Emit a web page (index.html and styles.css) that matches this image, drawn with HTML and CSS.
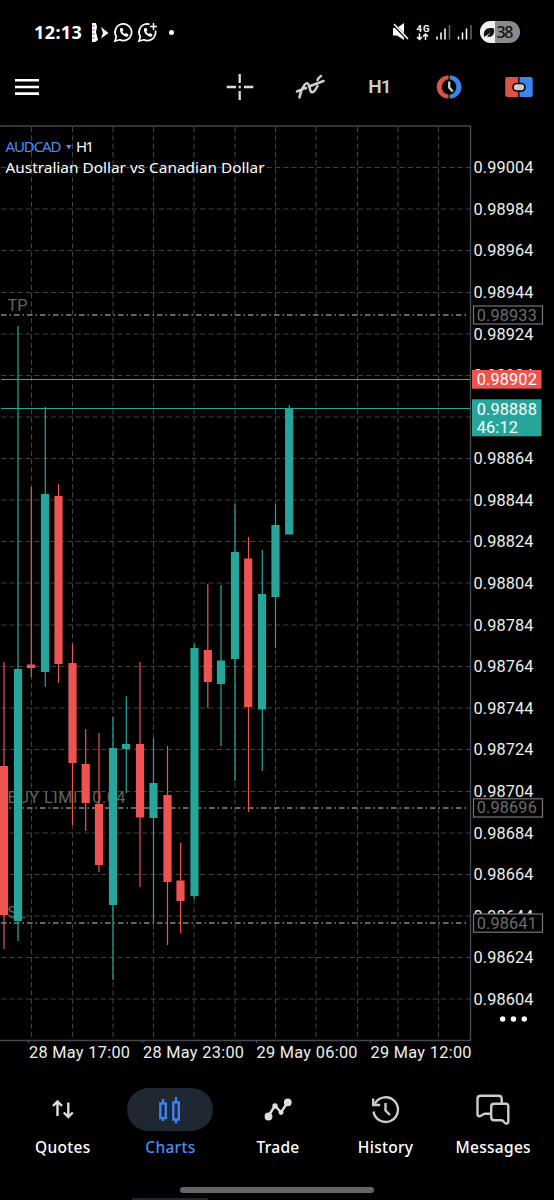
FILE: index.html
```
<!DOCTYPE html>
<html lang="en">

<head>
    <meta charset="UTF-8">
    <meta name="viewport" content="width=device-width, initial-scale=1.0">
    <title>AUDCAD H1</title>
    <link rel="stylesheet" href="styles.css">
</head>

<body>
    <div class="app">
        <!-- Status bar -->
        <div class="status-bar">
            <span class="clock">12:13</span>
            <svg class="status-left" width="90" height="24" viewBox="90 20 90 24">
                <path d="M92 23h4l1 4-1 5 2 8-3 2h-3z" fill="#fff" />
                <path d="M92.500 26h2M92.500 30h2M92.500 34h2M92.500 38h2" stroke="#000" stroke-width=".7" />
                <path d="M101 27l7.500 6-7.500 5.500 2-5.500z" fill="#fff" />
                <path d="M115 41l1.300-4.300a8.300 8.300 0 1 1 3.500 3.100zM139 41l1.300-4.300a8.300 8.300 0 1 1 3.500 3.100z" fill="none" stroke="#fff" stroke-width="1.700" />
                <path d="M149.500 22h8v8.500h-3.500l-4.500-4.500z" fill="#000" />
                <path d="M153.500 23v7M150 26.500h7" stroke="#fff" stroke-width="1.500" />
                <path d="M120 28.500c-1 4 4 9 8 8l.5-2-2.500-1.500-1.300 1c-1-.4-2-1.500-2.300-2.500l1-1.200-1-2.500zM144 28.500c-1 4 4 9 8 8l.5-2-2.500-1.500-1.300 1c-1-.4-2-1.500-2.300-2.500l1-1.200-1-2.500z" fill="#fff" />
                <circle cx="171.500" cy="32.500" r="2.500" fill="#fff" />
            </svg>
            <svg class="status-right" width="130" height="24" viewBox="391 20 130 24">
                <path d="M393 28h4l7-5v17l-7-4.500h-4z" fill="#fff" />
                <path d="M393.500 24.500l15 15.500" stroke="#000" stroke-width="3" />
                <path d="M394 24l14 15" stroke="#fff" stroke-width="1.600" />
                <text x="416.500" y="32" class="net" textLength="13">4G</text>
                <path d="M419.500 33.500v5.500M417 37l2.500 2.500 2.500-2.500M425.500 40v-5.500M423 36.500l2.500-2.500 2.500 2.500" fill="none" stroke="#fff" stroke-width="1.500" />
                <path d="M437 36.500v3M441 32.500v7M445 28.500v11M458.500 36.500v3M462.500 32.500v7M466.500 28.500v11" stroke="#fff" stroke-width="1.500" />
                <path d="M449.500 25v14.500M471 25v14.500" stroke="#666" stroke-width="1.500" />
                <path d="M491 21h18a11 11 0 0 1 0 22h-18a11 11 0 0 1 0-22z" fill="#8b8b8b" />
                <path d="M491 21h4v22h-4a11 11 0 0 1 0-22z" fill="#eee" />
                <path d="M484 37c-1-7 3-10 10-8.500 1 6-2 9.500-7 8l4-4-5.500 3.500z" fill="#111" />
                <text x="496.500" y="38" class="battery" textLength="17">38</text>
            </svg>
        </div>

        <!-- Toolbar -->
        <div class="toolbar">
            <svg width="26" height="22" viewBox="14 76 26 22">
                <path d="M15 80.300h24M15 87h24M15 93.600h24" stroke="#fff" stroke-width="2.600" />
            </svg>
            <div class="tools">
                <svg width="28" height="28" viewBox="226 73 28 28">
                    <path d="M239.700 74v9M239.700 91v9M226.700 87h9.300M244 87h9.300M238.600 87h2.200" stroke="#ddd" stroke-width="2.300" />
                </svg>
                <svg width="30" height="26" viewBox="294 74 30 26">
                    <path d="M296 91.500l6-2.500M298.500 97.500q1-7 5-12.500c3-4 5 0 5.500 4 .5 4 3 4.500 5.500.5M308 86.500l14.500-5.500M316.500 80q1-2.500 3.500-4M314.500 89.500l2-3.500M303.500 88.500l1.500-.5" fill="none" stroke="#ccc" stroke-width="2.500" stroke-linecap="round" />
                </svg>
                <span class="period">H1</span>
                <svg width="28" height="24" viewBox="435 75 28 24">
                    <path d="M448.200 75.800a11.200 11.200 0 0 0 0 22.400v-3.300a8 8 0 0 1 0-15.800z" fill="#dd5147" stroke="#dd5147" stroke-width=".7" />
                    <path d="M450 75.800a11.200 11.200 0 0 1 0 22.400v-3.300a8 8 0 0 0 0-15.800z" fill="#3a86ee" stroke="#3a86ee" stroke-width=".7" />
                    <path d="M449.200 81.500v6l3.500 4" fill="none" stroke="#ccc" stroke-width="2.300" />
                </svg>
                <svg width="28" height="20" viewBox="505 77 28 20">
                    <path d="M518.200 77h-11q-2 0-2 2v16q0 2 2 2h11z" fill="#dd5147" />
                    <path d="M519.500 77h11.200q2 0 2 2v16q0 2-2 2h-11.200z" fill="#3a86ee" />
                    <rect x="513" y="83.500" width="12" height="7.500" rx="3.700" fill="#ccc" stroke="#000" stroke-width="1.600" />
                </svg>
            </div>
        </div>

        <!-- Chart -->
        <svg class="chart" width="554" height="945" viewBox="0 125 554 945">
            <path class="grid" d="M31.500 127V1040M72.500 127V1040M113 127V1040M153.500 127V1040M194 127V1040M235 127V1040M275.500 127V1040M316 127V1040M357.500 127V1040M398 127V1040M438.500 127V1040" />
            <path class="grid" d="M1 167.500H472M1 209H472M1 250.500H472M1 292.500H472M1 334H472M1 375.500H472M1 417H472M1 458.500H472M1 500H472M1 541.500H472M1 583H472M1 625H472M1 666.500H472M1 708H472M1 749.500H472M1 791.500H472M1 833H472M1 874.500H472M1 916H472M1 957.500H472M1 999H472" />
            <path class="frame" d="M0 126H470.500V1040.500H0M28.500 1041v2M142.500 1041v2M256.500 1041v2M370.500 1041v2" />

            <!-- Orders -->
            <path class="order" d="M1 315H468M1 808H468M1 923H468" />
            <text class="order-text" x="7.500" y="310.500" textLength="20">TP</text>
            <text class="order-text" x="7.500" y="803" textLength="118">BUY LIMIT 0.04</text>
            <text class="order-text" x="7.500" y="918" textLength="18">SL</text>

            <!-- Candles -->
            <path class="wick up" d="M18 326V941M45.300 407V687M113 717V980M126.300 696V793M153.500 738V923M194.300 644V899M221 585V746M235 504V781M262.300 550V771M275.500 504V648M289.300 405V534" />
            <path class="wick down" d="M4 662V949M31.300 487V677M58.500 484V683M72.500 644V825M85.700 729V831M99 733V872M140 662V887M167.500 746V945M180.600 843V933M207.800 584V708M248.500 537V812" />
            <path class="body up" d="M18 669V921M45 494V672M113 748V905M126 744V749M153.500 783V818M194.500 648V896M221 660.500V684M235 552V659M262 594V709.500M275.500 525V597M289.200 409V534.500" />
            <path class="body down" d="M4 766V915M31 664.500V668M58.500 496V664M72.500 663V763M85.700 764V803M99 804V865M140 744V817.500M167.500 795V882M180.500 880.500V901M207.800 650V682M248.200 558.500V707" />

            <path class="ask" d="M1 379.500H470" />
            <path class="bid" d="M1 408.500H470" />

            <!-- Prices -->
            <g class="price">
                <text x="473.500" y="173" textLength="60">0.99004</text>
                <text x="473.500" y="214.500" textLength="60">0.98984</text>
                <text x="473.500" y="256" textLength="60">0.98964</text>
                <text x="473.500" y="298" textLength="60">0.98944</text>
                <text x="473.500" y="339.500" textLength="60">0.98924</text>
                <text x="473.500" y="381" textLength="60">0.98904</text>
                <text x="473.500" y="464" textLength="60">0.98864</text>
                <text x="473.500" y="505.500" textLength="60">0.98844</text>
                <text x="473.500" y="547" textLength="60">0.98824</text>
                <text x="473.500" y="588.500" textLength="60">0.98804</text>
                <text x="473.500" y="630.500" textLength="60">0.98784</text>
                <text x="473.500" y="672" textLength="60">0.98764</text>
                <text x="473.500" y="713.500" textLength="60">0.98744</text>
                <text x="473.500" y="755" textLength="60">0.98724</text>
                <text x="473.500" y="797" textLength="60">0.98704</text>
                <text x="473.500" y="838.500" textLength="60">0.98684</text>
                <text x="473.500" y="880" textLength="60">0.98664</text>
                <text x="473.500" y="921.500" textLength="60">0.98644</text>
                <text x="473.500" y="963" textLength="60">0.98624</text>
                <text x="473.500" y="1004.500" textLength="60">0.98604</text>
            </g>
            <g class="tag">
                <rect x="473.500" y="306" width="69" height="18" />
                <rect x="473.500" y="798.800" width="69" height="18.200" />
                <rect x="473.500" y="914" width="69" height="18.200" />
                <text x="476.800" y="320.500" textLength="60">0.98933</text>
                <text x="476.800" y="813.300" textLength="60">0.98696</text>
                <text x="476.800" y="928.500" textLength="60">0.98641</text>
            </g>
            <rect class="ask-tag" x="472" y="370" width="69.500" height="18.700" />
            <rect class="bid-tag" x="472" y="399.300" width="69.500" height="37" />
            <g class="tag-text">
                <text x="476.800" y="385.300" textLength="60">0.98902</text>
                <text x="476.800" y="414.500" textLength="60">0.98888</text>
                <text x="476.800" y="433" textLength="41">46:12</text>
            </g>
            <path class="more" d="M502.700 1019h0M513.500 1019h0M524.300 1019h0" />

            <!-- Dates -->
            <g class="price">
                <text x="29" y="1057.500" textLength="101">28 May 17:00</text>
                <text x="143" y="1057.500" textLength="101">28 May 23:00</text>
                <text x="256.500" y="1057.500" textLength="101">29 May 06:00</text>
                <text x="370.500" y="1057.500" textLength="101">29 May 12:00</text>
            </g>

            <!-- Symbol -->
            <g class="symbol">
                <text class="link" x="5.500" y="152" textLength="56">AUDCAD</text>
                <path class="arrow" d="M66 145h5.500l-2.700 4.500z" />
                <text x="76" y="152" textLength="18">H1</text>
                <text x="5.500" y="172.500" textLength="259" lengthAdjust="spacingAndGlyphs">Australian Dollar vs Canadian Dollar</text>
            </g>
        </svg>

        <!-- Navigation -->
        <nav class="nav">
            <div class="nav-item">
                <div class="nav-icon">
                    <svg width="24" height="22" viewBox="50 1099 24 22">
                        <path d="M56.500 1116v-14M52 1106l4.500-4.500 4.500 4.500M67.300 1102.500v14M62.800 1112.500l4.500 4.500 4.500-4.500" fill="none" stroke="#ddd" stroke-width="2.400" />
                    </svg>
                </div>
                <span>Quotes</span>
            </div>
            <div class="nav-item active">
                <div class="nav-icon">
                    <svg width="24" height="28" viewBox="158 1096 24 28">
                        <path d="M160.300 1103.500h5.500v14.500h-5.500zM163 1099v4M163 1118v3M173.300 1102.500h5.500v17h-5.500zM176 1097v5M176 1120v3.500" fill="none" stroke="#3a83f2" stroke-width="2.400" />
                    </svg>
                </div>
                <span>Charts</span>
            </div>
            <div class="nav-item">
                <div class="nav-icon">
                    <svg width="30" height="26" viewBox="262 1097 30 26">
                        <path d="M267.500 1116l6.500-10.500 6 7 6.500-10" fill="none" stroke="#ddd" stroke-width="2.500" />
                        <g fill="#ddd">
                            <circle cx="267.500" cy="1116.500" r="3.900" />
                            <circle cx="274" cy="1106" r="2.700" />
                            <circle cx="280" cy="1112.500" r="2.400" />
                            <circle cx="286.800" cy="1102.300" r="3.900" />
                        </g>
                    </svg>
                </div>
                <span>Trade</span>
            </div>
            <div class="nav-item">
                <div class="nav-icon">
                    <svg width="30" height="30" viewBox="370 1095 30 30">
                        <path d="M372.500 1111.500a12.300 12.300 0 1 0 1.500-8M372.200 1098.500v6.500h7M384.500 1103v7.500l4.500 4.500" fill="none" stroke="#ccc" stroke-width="2.400" />
                    </svg>
                </div>
                <span>History</span>
            </div>
            <div class="nav-item">
                <div class="nav-icon">
                    <svg width="34" height="32" viewBox="475 1094 34 32">
                        <path d="M489 1113.800h-5c-3 0-3 2.500-5.500 2.500-1.500 0-2-.8-2-2.300v-15q0-3.200 3.200-3.200h17.800q3.200 0 3.200 3.200v4.500" fill="none" stroke="#ccc" stroke-width="2.400" />
                        <path d="M493.200 1103.700h11.500q2.600 0 2.600 2.600v15q0 2.300-2 2.300c-2.500 0-2-3.300-5-3.300h-7.100q-3 0-3-3v-10.600q0-3 3-3z" fill="none" stroke="#ccc" stroke-width="2.400" />
                    </svg>
                </div>
                <span>Messages</span>
            </div>
        </nav>
        <div class="home-bar"></div>
        <div class="bottom-edge"></div>
    </div>
</body>

</html>
```
FILE: styles.css
```
body {
    background-color: #000;
    font-family: "Noto Sans", sans-serif;
    color: #fff;
    margin: 0;
}

.app {
    display: flex;
    flex-direction: column;
    width: 554px;
    height: 1200px;
    overflow: hidden;
}

svg {
    display: block;
    flex-shrink: 0;
}

.status-bar {
    display: flex;
    align-items: center;
    height: 64px;
    padding: 0 33px 0 34px;
}

.clock {
    width: 56px;
    font-size: 18px;
    font-weight: bold;
    letter-spacing: 0.4px;
    line-height: 24px;
}

.status-right {
    margin-left: auto;
}

.net {
    font: bold 9.5px Roboto, sans-serif;
    fill: #fff;
}

.battery {
    font: 500 16px "Noto Sans", sans-serif;
    fill: #111;
}

.toolbar {
    display: flex;
    align-items: center;
    justify-content: space-between;
    height: 46px;
    padding: 0 0 15px 14px;
}

.tools {
    display: grid;
    grid-template-columns: repeat(5, 1fr);
    align-items: center;
    justify-items: center;
    width: 349px;
}

.period {
    font: 600 19px/24px Roboto, sans-serif;
    letter-spacing: -1px;
    color: #ccc;
}

.chart {
    font-family: Roboto, sans-serif;
    font-size: 16.3px;
}

.chart path {
    fill: none;
}

.grid {
    stroke: #404044;
    stroke-width: 1.1;
    stroke-dasharray: 5.3 3;
}

.chart .frame {
    stroke: #43474b;
    stroke-width: 1.4;
}

.order {
    stroke: #858585;
    stroke-width: 1.3;
    stroke-dasharray: 5.5 3 1.5 3;
}

.order-text {
    fill: #636363;
}

.wick {
    stroke-width: 1.2;
}

.body {
    stroke-width: 8.2;
}

.up {
    stroke: #26a69a;
}

.down {
    stroke: #ef5350;
}

.ask {
    stroke: #ef5350;
    stroke-width: 1.2;
}

.bid {
    stroke: #26a69a;
    stroke-width: 1.2;
}

.price {
    fill: #eee;
}

.tag rect {
    fill: #000;
    stroke: #76777a;
    stroke-width: 1.2;
}

.tag text {
    fill: #6c6c6c;
}

.ask-tag {
    fill: #ef5350;
}

.bid-tag {
    fill: #26a69a;
}

.tag-text {
    fill: #fff;
}

.more {
    stroke: #fff;
    stroke-width: 5.4;
    stroke-linecap: round;
}

.symbol {
    font-family: "Noto Sans", sans-serif;
    font-size: 15px;
    fill: #fff;
}

.symbol .link,
.symbol .arrow {
    fill: #4a8df5;
}

.nav {
    display: flex;
    height: 99px;
    padding: 18px 7px 0 9px;
}

.nav-item {
    flex: 1;
    display: flex;
    flex-direction: column;
    align-items: center;
    font-size: 15.5px;
    font-weight: 500;
    line-height: 22px;
    letter-spacing: 0.3px;
}

.nav-icon {
    display: flex;
    align-items: center;
    justify-content: center;
    width: 86px;
    height: 43px;
    margin-bottom: 5px;
    border-radius: 22px;
}

.active {
    color: #4a8df5;
}

.active .nav-icon {
    background-color: #1f2733;
}

.home-bar {
    width: 194px;
    height: 6px;
    border-radius: 3px;
    margin: 0 auto;
    background-color: #666;
}

.bottom-edge {
    width: 76px;
    height: 2px;
    margin: 5px 0 0 132px;
    background-color: #1f2733;
}
```
